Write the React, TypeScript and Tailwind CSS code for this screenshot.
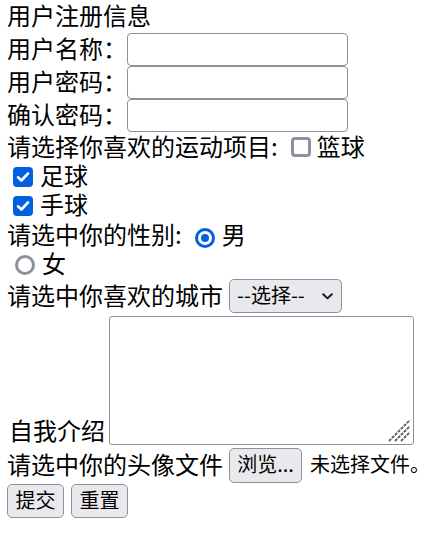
import React from "react";

const font = { fontFamily: '"Noto Sans CJK SC", "Noto Sans", sans-serif' };

function Box({ checked }: { checked: boolean }) {
  if (checked) {
    return (
      <span className="inline-flex h-[20px] w-[20px] shrink-0 items-center justify-center rounded-[4px] bg-[#0060df]">
        <svg width="14" height="12" viewBox="0 0 14 12">
          <path d="M2 6.3 L5.4 9.5 L12 2.5" fill="none" stroke="#ffffff" strokeWidth="2.6" strokeLinecap="round" strokeLinejoin="round" />
        </svg>
      </span>
    );
  }
  return <span className="inline-block h-[20px] w-[20px] shrink-0 rounded-[4px] border-[3px] border-[#8f8f9d] bg-white" />;
}

function Radio({ checked }: { checked: boolean }) {
  if (checked) {
    return (
      <span className="inline-flex h-[20px] w-[20px] shrink-0 items-center justify-center rounded-full bg-[#0060df]">
        <span className="flex h-[14px] w-[14px] items-center justify-center rounded-full bg-white">
          <span className="h-[8px] w-[8px] rounded-full bg-[#0060df]" />
        </span>
      </span>
    );
  }
  return <span className="inline-block h-[20px] w-[20px] shrink-0 rounded-full border-[3px] border-[#8f8f9d] bg-white" />;
}

function TextInput() {
  return <span className="block h-[33px] w-[221px] shrink-0 rounded-[4px] border border-[#8f8f9d] bg-white" />;
}

export default function App() {
  return (
    <div className="min-h-[547px] w-[428px] whitespace-nowrap bg-white pl-[7px] text-[24px] leading-none text-black" style={font}>
      <div className="flex h-[33px] items-center pb-[4px]">用户注册信息</div>
      <div className="flex h-[33px] items-center">
        <span className="mb-[3px] w-[120px] shrink-0">用户名称：</span>
        <TextInput />
      </div>
      <div className="flex h-[33px] items-center">
        <span className="mb-[3px] w-[120px] shrink-0">用户密码：</span>
        <TextInput />
      </div>
      <div className="flex h-[33px] items-center">
        <span className="mb-[3px] w-[120px] shrink-0">确认密码：</span>
        <TextInput />
      </div>
      <div className="flex h-[30px] items-center">
        <span className="mb-[3px] shrink-0">请选择你喜欢的运动项目:</span>
        <span className="ml-[13px] flex shrink-0"><Box checked={false} /></span>
        <span className="mb-[3px] ml-[6px] shrink-0">篮球</span>
      </div>
      <div className="flex h-[29px] items-center pl-[6px]">
        <Box checked={true} />
        <span className="mb-[3px] ml-[7px] shrink-0">足球</span>
      </div>
      <div className="flex h-[29px] items-center pl-[6px]">
        <Box checked={true} />
        <span className="mb-[3px] ml-[7px] shrink-0">手球</span>
      </div>
      <div className="flex h-[30px] items-center">
        <span className="mb-[3px] shrink-0">请选中你的性别:</span>
        <span className="ml-[13px] mt-[5px] flex shrink-0"><Radio checked={true} /></span>
        <span className="mb-[3px] ml-[7px] shrink-0">男</span>
      </div>
      <div className="flex h-[29px] items-center pl-[8px]">
        <Radio checked={false} />
        <span className="mb-[3px] ml-[7px] shrink-0">女</span>
      </div>
      <div className="flex h-[34px] items-center">
        <span className="mb-[3px] shrink-0">请选中你喜欢的城市</span>
        <span className="ml-[6px] flex h-[34px] w-[113px] shrink-0 items-center rounded-[5px] border border-[#8f8f9d] bg-[#e9e9ed] pl-[7px] text-[20px]">
          <span className="mb-[2px]">--选择--</span>
          <svg className="ml-auto mr-[8px]" width="11" height="7" viewBox="0 0 11 7">
            <path d="M1.2 1.2 L5.5 5.4 L9.8 1.2" fill="none" stroke="#1a1a1a" strokeWidth="2" strokeLinecap="round" strokeLinejoin="round" />
          </svg>
        </span>
      </div>
      <div className="flex items-end">
        <span className="mb-[5px] ml-[2px] shrink-0">自我介绍</span>
        <span className="relative mb-[2px] ml-[4px] mt-[3px] block h-[129px] w-[305px] shrink-0 rounded-[3px] border border-[#8f8f9d] bg-white">
          <svg className="absolute bottom-[2px] right-[2px]" width="24" height="24" viewBox="0 0 24 24">
            <path d="M2 23 L23 2 M8 23 L23 8 M14 23 L23 14" stroke="#5b5b66" strokeWidth="1.9" strokeDasharray="3 1.2" fill="none" />
          </svg>
        </span>
      </div>
      <div className="flex h-[36px] items-center">
        <span className="mb-[3px] shrink-0">请选中你的头像文件</span>
        <span className="ml-[6px] flex h-[35px] w-[73px] shrink-0 items-center justify-center rounded-[5px] border border-[#8f8f9d] bg-[#e9e9ed] text-[20px]">
          <span className="mb-[2px]">浏览...</span>
        </span>
        <span className="mb-[2px] ml-[8px] shrink-0 text-[20px]">未选择文件。</span>
      </div>
      <div className="flex h-[35px] items-center gap-[7px]">
        <span className="flex h-[34px] w-[57px] shrink-0 items-center justify-center rounded-[5px] border border-[#8f8f9d] bg-[#e9e9ed] text-[20px]">
          <span className="mb-[2px]">提交</span>
        </span>
        <span className="flex h-[34px] w-[57px] shrink-0 items-center justify-center rounded-[5px] border border-[#8f8f9d] bg-[#e9e9ed] text-[20px]">
          <span className="mb-[2px]">重置</span>
        </span>
      </div>
    </div>
  );
}
